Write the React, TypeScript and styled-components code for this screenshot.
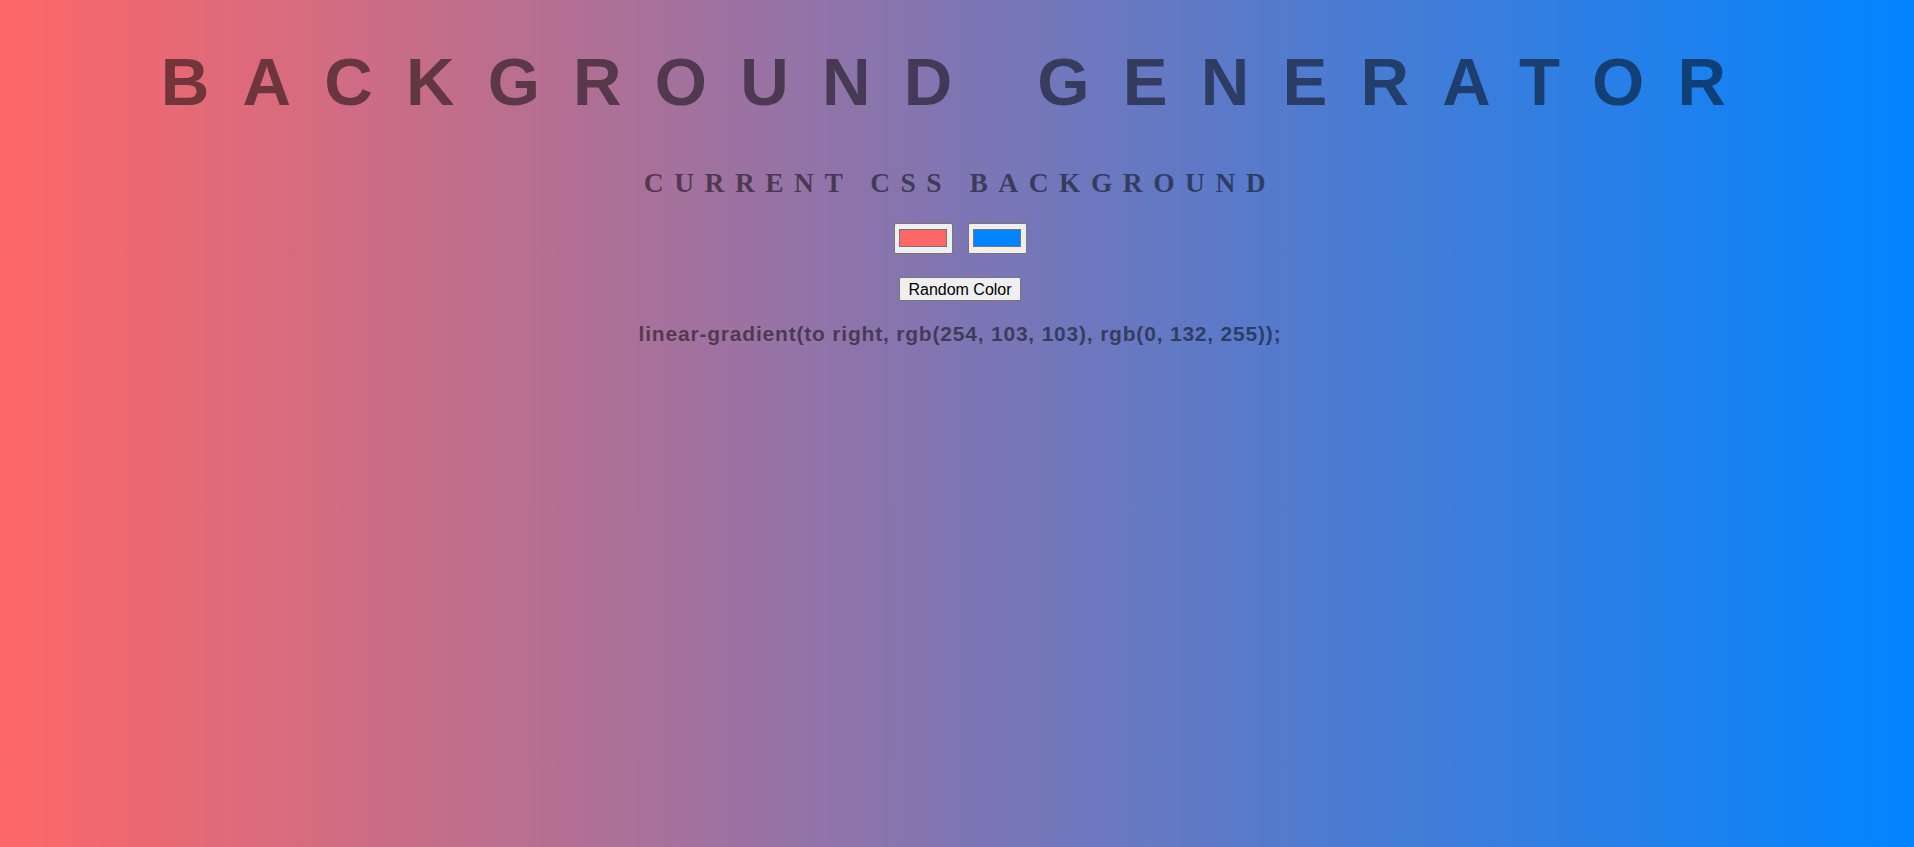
import React, { useState } from "react";
import styled, { createGlobalStyle } from "styled-components";

const GlobalStyle = createGlobalStyle`
  html, body {
    margin: 0;
    padding: 0;
  }
  body {
    font-family: "Liberation Sans", Arial, sans-serif;
  }
`;

const Page = styled.div`
  min-height: 100vh;
  box-sizing: border-box;
  padding: 43px 2px 0 8px;
  display: flex;
  flex-direction: column;
  align-items: center;
  text-align: center;
  color: rgba(0, 0, 0, 0.5);
`;

const Title = styled.h1`
  margin: 0;
  font-family: "Liberation Sans", Arial, sans-serif;
  font-weight: 700;
  font-size: 67.2px;
  line-height: 77px;
  letter-spacing: 33.2px;
  text-transform: uppercase;
  white-space: nowrap;
`;

const Subtitle = styled.h3`
  margin: 47px 0 0;
  font-family: "Liberation Serif", "Times New Roman", serif;
  font-weight: 700;
  font-size: 27.5px;
  line-height: 31px;
  letter-spacing: 10.5px;
  text-transform: uppercase;
  white-space: nowrap;
`;

const Pickers = styled.div`
  margin-top: 25px;
  display: flex;
  gap: 15px;
`;

const ColorInput = styled.input`
  appearance: none;
  -webkit-appearance: none;
  box-sizing: border-box;
  width: 59px;
  height: 31px;
  margin: 0;
  padding: 5px 5px 6px 4px;
  border: 1px solid #767676;
  border-radius: 2px;
  background: #efefef;
  cursor: pointer;

  &::-webkit-color-swatch-wrapper {
    padding: 0;
  }
  &::-webkit-color-swatch {
    border: 1px solid #777;
    border-radius: 0;
  }
`;

const RandomButton = styled.button`
  margin-top: 23px;
  box-sizing: border-box;
  height: 24px;
  padding: 1px 8px;
  font-family: "Liberation Sans", Arial, sans-serif;
  font-size: 16px;
  line-height: 19px;
  color: #000;
  background: #efefef;
  border: 1px solid #767676;
  border-radius: 2px;
  cursor: pointer;
`;

const CssText = styled.h3`
  margin: 21px 0 0;
  font-family: "Liberation Sans", Arial, sans-serif;
  font-weight: 700;
  font-size: 21px;
  line-height: 24px;
  letter-spacing: 0.8px;
  white-space: nowrap;
`;

const hexToRgb = (hex: string) => {
  const n = parseInt(hex.slice(1), 16);
  return `rgb(${(n >> 16) & 255}, ${(n >> 8) & 255}, ${n & 255})`;
};

const randomHex = () =>
  "#" +
  Math.floor(Math.random() * 0xffffff)
    .toString(16)
    .padStart(6, "0");

const App = () => {
  const [color1, setColor1] = useState("#fe6767");
  const [color2, setColor2] = useState("#0084ff");

  const gradient = `linear-gradient(to right, ${hexToRgb(color1)}, ${hexToRgb(color2)})`;

  return (
    <>
      <GlobalStyle />
      <Page style={{ background: gradient }}>
        <Title>Background Generator</Title>
        <Subtitle>Current CSS Background</Subtitle>
        <Pickers>
          <ColorInput
            type="color"
            value={color1}
            onChange={(e) => setColor1(e.target.value)}
          />
          <ColorInput
            type="color"
            value={color2}
            onChange={(e) => setColor2(e.target.value)}
          />
        </Pickers>
        <RandomButton
          onClick={() => {
            setColor1(randomHex());
            setColor2(randomHex());
          }}
        >
          Random Color
        </RandomButton>
        <CssText>{gradient};</CssText>
      </Page>
    </>
  );
};

export default App;
